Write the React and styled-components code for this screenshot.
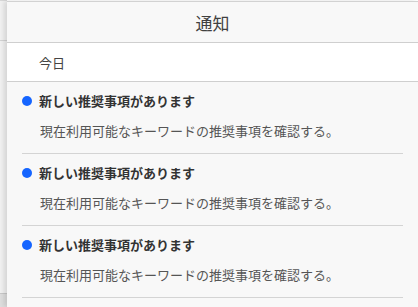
import React from 'react';
import styled, {createGlobalStyle} from 'styled-components';

const GlobalStyle = createGlobalStyle`
  html, body {
    margin: 0;
    padding: 0;
    background: #ffffff;
  }
  body {
    font-family: "Noto Sans CJK JP", "Noto Sans", sans-serif;
  }
`;

const items = [
  {id: 1, title: '新しい推奨事項があります', text: '現在利用可能なキーワードの推奨事項を確認する。', unread: true},
  {id: 2, title: '新しい推奨事項があります', text: '現在利用可能なキーワードの推奨事項を確認する。', unread: true},
  {id: 3, title: '新しい推奨事項があります', text: '現在利用可能なキーワードの推奨事項を確認する。', unread: true}
];

function App() {
  return (
    <Page>
      <GlobalStyle/>
      <Backdrop>
        <BackdropTop/>
        <BackdropMiddle/>
        <BackdropBottom/>
      </Backdrop>
      <Panel>
        <Header>通知</Header>
        <Section>今日</Section>
        <List>
          {items.map(item => (
            <Item key={item.id}>
              <TitleRow>
                <Dot $unread={item.unread}/>
                <Title>{item.title}</Title>
              </TitleRow>
              <Text>{item.text}</Text>
            </Item>
          ))}
        </List>
      </Panel>
    </Page>
  );
}

const Page = styled.div`
  display: flex;
  width: 418px;
  height: 307px;
  overflow: hidden;
  background: #ffffff;
`;

const Backdrop = styled.div`
  width: 7px;
  flex-shrink: 0;
  display: flex;
  flex-direction: column;
  background: #f1f1f1;
`;

const BackdropTop = styled.div`
  height: 41px;
  border-top: 1px solid #d8d8d8;
  border-bottom: 1px solid #d4d4d4;
  box-sizing: border-box;
`;

const BackdropMiddle = styled.div`
  flex: 1;
`;

const BackdropBottom = styled.div`
  height: 13px;
  border-top: 1px solid #c8c8c8;
  background: #dedede;
`;

const Panel = styled.div`
  flex: 1;
  display: flex;
  flex-direction: column;
  margin-top: 1px;
  border-top: 1px solid #d2d2d2;
  background: #f8f8f8;
  box-shadow: -3px 0 5px rgba(0, 0, 0, 0.12);
  position: relative;
`;

const Header = styled.div`
  height: 40px;
  display: flex;
  align-items: center;
  justify-content: center;
  font-size: 17px;
  color: #404040;
  background: #f8f8f8;
  border-bottom: 1px solid #cfcfcf;
`;

const Section = styled.div`
  height: 38px;
  display: flex;
  align-items: center;
  padding-left: 32px;
  font-size: 13px;
  color: #444;
  background: #ffffff;
  border-bottom: 1px solid #cfcfcf;
`;

const List = styled.div`
  display: flex;
  flex-direction: column;
`;

const Item = styled.div`
  margin: 0 15px;
  padding: 10px 0 13px;
  border-bottom: 1px solid #d4d4d4;
  display: flex;
  flex-direction: column;
  gap: 12px;
`;

const TitleRow = styled.div`
  display: flex;
  align-items: center;
  height: 18px;
`;

const Dot = styled.span`
  width: 10px;
  height: 10px;
  border-radius: 50%;
  margin-right: 7px;
  background: ${p => p.$unread ? '#1565ff' : 'transparent'};
  flex-shrink: 0;
`;

const Title = styled.span`
  font-size: 13px;
  font-weight: 700;
  color: #333;
  line-height: 18px;
`;

const Text = styled.div`
  font-size: 13px;
  color: #555;
  line-height: 18px;
  padding-left: 18px;
`;

export default App;
